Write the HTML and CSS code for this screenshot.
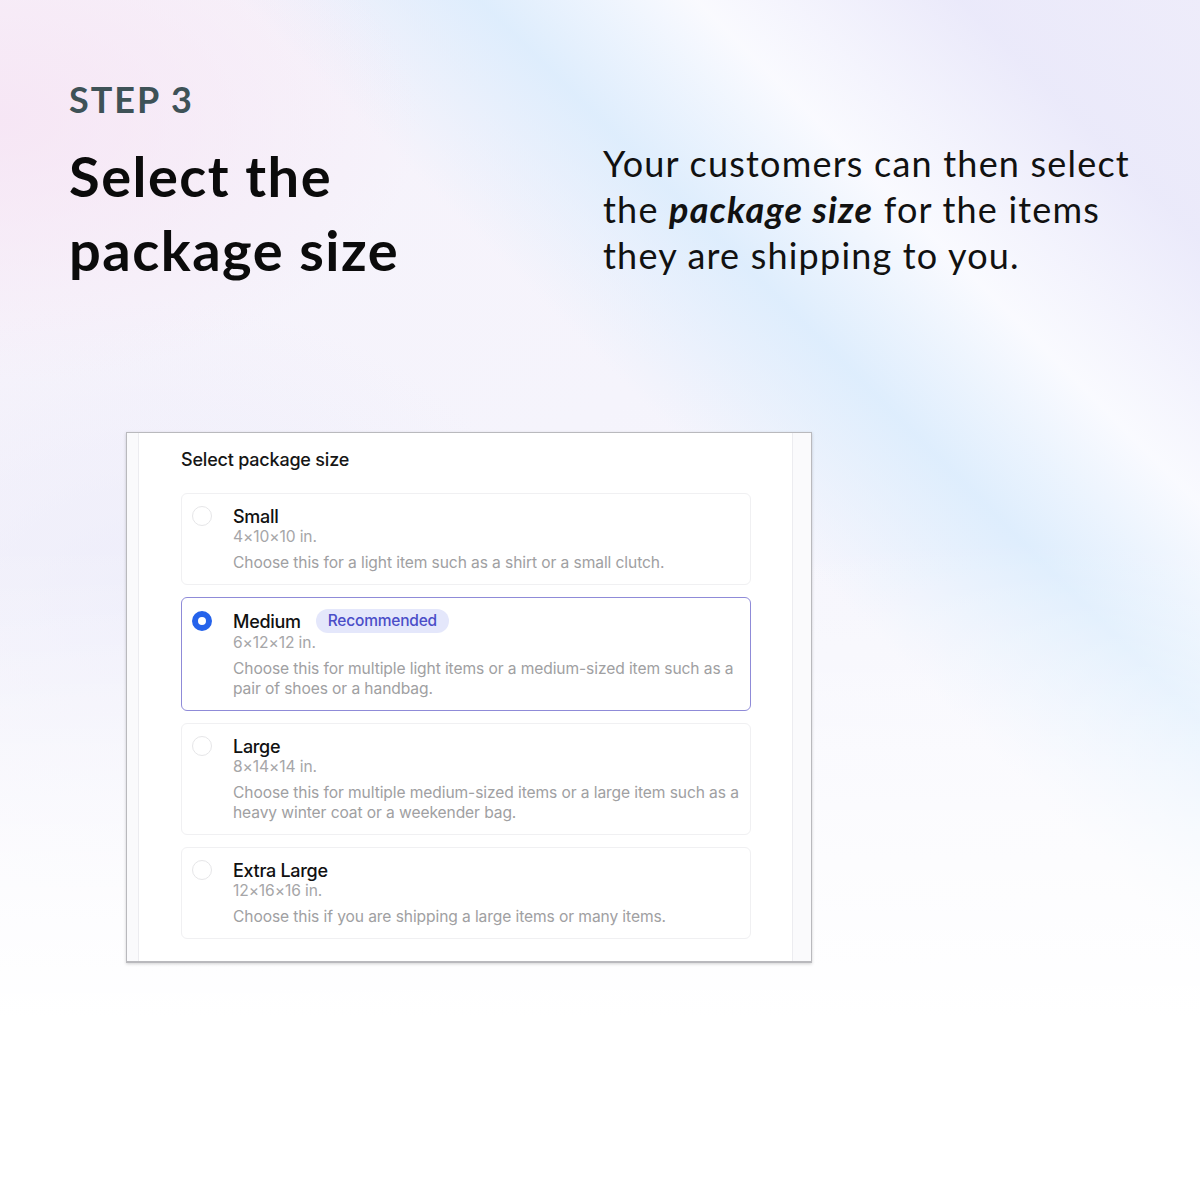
FILE: index.html
```html
<!DOCTYPE html>
<html lang="en">
  <head>
    <meta charset="UTF-8" />
    <title>Step 3 - Select the package size</title>
    <link rel="stylesheet" href="styles.css">
  </head>
  <body>
    <div class="page">
      <div class="intro">
        <div class="intro-left">
          <div class="step">STEP 3</div>
          <h1 class="headline">Select the<br />package size</h1>
        </div>
        <p class="lead">
          Your customers can then select the <em>package size</em> for the items
          they are shipping to you.
        </p>
      </div>

      <div class="card">
        <div class="panel">
          <h2 class="panel-title">Select package size</h2>

          <div class="options">
            <div class="option">
              <span class="radio"></span>
              <div class="option-body">
                <div class="option-head"><span class="option-name">Small</span></div>
                <div class="option-size">4×10×10 in.</div>
                <div class="option-desc">Choose this for a light item such as a shirt or a small clutch.</div>
              </div>
            </div>

            <div class="option selected">
              <span class="radio"></span>
              <div class="option-body">
                <div class="option-head">
                  <span class="option-name">Medium</span>
                  <span class="badge">Recommended</span>
                </div>
                <div class="option-size">6×12×12 in.</div>
                <div class="option-desc">Choose this for multiple light items or a medium-sized item such as a pair of shoes or a handbag.</div>
              </div>
            </div>

            <div class="option">
              <span class="radio"></span>
              <div class="option-body">
                <div class="option-head"><span class="option-name">Large</span></div>
                <div class="option-size">8×14×14 in.</div>
                <div class="option-desc">Choose this for multiple medium-sized items or a large item such as a heavy winter coat or a weekender bag.</div>
              </div>
            </div>

            <div class="option">
              <span class="radio"></span>
              <div class="option-body">
                <div class="option-head"><span class="option-name">Extra Large</span></div>
                <div class="option-size">12×16×16 in.</div>
                <div class="option-desc">Choose this if you are shipping a large items or many items.</div>
              </div>
            </div>
          </div>
        </div>
      </div>
    </div>
  </body>
</html>
```

FILE: styles.css
```css
body {
  margin: 0;
  font-family: "Lato", "Noto Sans", sans-serif;
  color: #0b0b0b;
}

.page {
  width: 1200px;
  height: 1200px;
  box-sizing: border-box;
  padding: 78px 70px 0 69px;
  background:
    linear-gradient(to bottom, rgba(255, 255, 255, 0) 45%, #ffffff 85%),
    radial-gradient(ellipse 420px 260px at 0px 120px, rgba(246, 228, 244, 0.85), rgba(246, 228, 244, 0)),
    linear-gradient(45deg, rgba(255, 255, 255, 0) 60%, rgba(218, 236, 253, 0.85) 70%, rgba(250, 251, 255, 0.85) 79%, rgba(232, 231, 250, 0.8) 90%, rgba(236, 234, 250, 0.8) 100%),
    radial-gradient(ellipse 400px 300px at 150px 600px, rgba(236, 236, 250, 0.8), rgba(236, 236, 250, 0)),
    linear-gradient(150deg, #f7f2fa 0%, #f5f4fc 40%, #f6f6fd 60%, #f8f8fd 100%);
}

.intro {
  display: flex;
  justify-content: space-between;
  align-items: flex-start;
}

.step {
  font-size: 36px;
  font-weight: 700;
  line-height: 43px;
  letter-spacing: 2px;
  color: #3e5257;
}

.headline {
  margin: 18px 0 0;
  font-size: 56px;
  font-weight: 700;
  line-height: 74px;
  letter-spacing: 1.5px;
}

.lead {
  width: 527px;
  margin: 62px 0 0;
  font-size: 36px;
  line-height: 46px;
  letter-spacing: 1.2px;
  color: #111;
}

.lead em {
  font-weight: 700;
}

/* the screenshot */
.card {
  width: 686px;
  margin: 145px 0 0 57px;
  box-sizing: border-box;
  border: 1px solid #b9b9bd;
  border-bottom-width: 2px;
  background: #fafafc;
  padding: 0 18px 0 11px;
  box-shadow: 0 1px 3px rgba(0, 0, 0, 0.18);
  font-family: "Inter", "Liberation Sans", sans-serif;
}

.panel {
  background: #fff;
  border-left: 1px solid #ececf0;
  border-right: 1px solid #ececf0;
  padding: 16px 41px 22px 42px;
}

.panel-title {
  margin: 0 0 22px;
  font-size: 18px;
  font-weight: 500;
  line-height: 22px;
  color: #161616;
  letter-spacing: -0.2px;
}

.options {
  display: flex;
  flex-direction: column;
  gap: 12px;
}

.option {
  display: flex;
  gap: 21px;
  padding: 11px 6px 11px 10px;
  border: 1px solid #f0f0f2;
  border-radius: 6px;
}

.option.selected {
  border-color: #8f8bd8;
}

.radio {
  flex: none;
  width: 20px;
  height: 20px;
  box-sizing: border-box;
  border: 1px solid #e6e6e8;
  border-radius: 50%;
  margin-top: 1px;
}

.selected .radio {
  border: 6px solid #2563eb;
  background: #fff;
  margin-top: 2px;
}

.option-body {
  flex: 1;
}

.option-head {
  display: flex;
  align-items: center;
  gap: 15px;
  min-height: 22px;
}

.option-name {
  font-size: 18px;
  font-weight: 500;
  color: #111;
  letter-spacing: -0.3px;
}

.badge {
  height: 24px;
  line-height: 24px;
  padding: 0 12px;
  border-radius: 12px;
  background: #e4e7fb;
  color: #4b4ec8;
  font-size: 15.5px;
  font-weight: 500;
  letter-spacing: -0.2px;
}

.option-size {
  font-size: 15.6px;
  line-height: 20px;
  color: #a6a6a8;
  letter-spacing: -0.1px;
}

.option-desc {
  margin-top: 6px;
  font-size: 15.6px;
  line-height: 20px;
  color: #a0a0a2;
  letter-spacing: -0.1px;
}
```
